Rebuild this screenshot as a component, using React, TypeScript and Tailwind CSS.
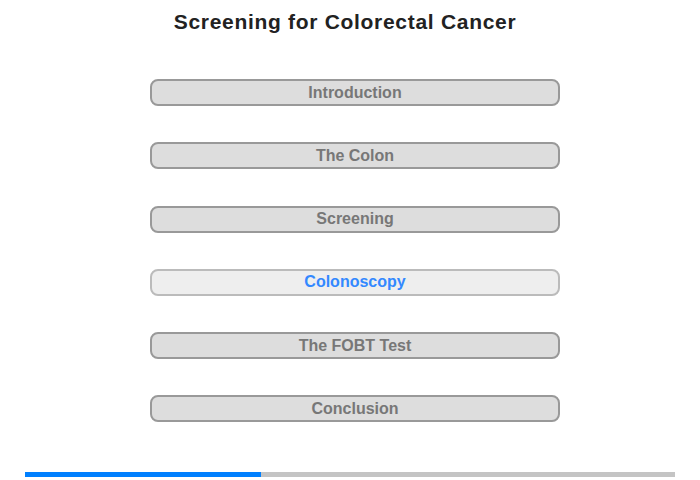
const sections = ['Introduction', 'The Colon', 'Screening', 'Colonoscopy', 'The FOBT Test', 'Conclusion'];
const active = 'Colonoscopy';

export default function App() {
    return (
        <div className="w-[700px] h-[480px] bg-white flex flex-col font-['Liberation_Sans',Arial,sans-serif]">
            {/* Title */}
            <h1 className="pt-[10px] pr-[10px] text-center text-[21px] leading-[24px] font-bold tracking-[0.7px] text-[#222]">
                Screening for Colorectal Cancer
            </h1>

            {/* Section menu */}
            <div className="mt-[45px] pl-[150px] flex flex-col gap-[36.25px]">
                {sections.map((s) => (
                    <button
                        key={s}
                        className={
                            s === active
                                ? 'w-[410px] h-[27px] rounded-[8px] border-2 border-[#bbb] bg-[#eee] text-[#3388ff] text-[16px] font-bold leading-none'
                                : 'w-[410px] h-[27px] rounded-[8px] border-2 border-[#999] bg-[#ddd] text-[#777] text-[16px] font-bold leading-none'
                        }
                    >
                        {s}
                    </button>
                ))}
            </div>

            {/* Progress */}
            <div className="mt-auto mb-[3px] mx-[25px] h-[5px] bg-[#c4c4c4] flex">
                <div className="w-[236px] bg-[#0080ff]" />
            </div>
        </div>
    );
}
